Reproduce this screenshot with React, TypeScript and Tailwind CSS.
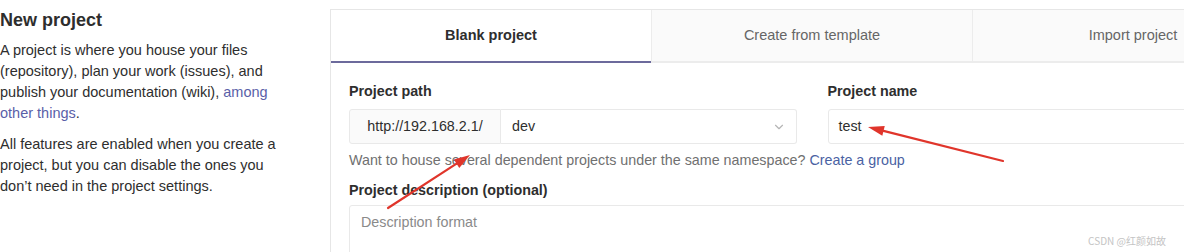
import React from 'react';
import { ChevronDown } from 'lucide-react';

const tabs = ['Blank project', 'Create from template', 'Import project'];

const Arrow: React.FC<{ x1: number; y1: number; x2: number; y2: number }> = ({ x1, y1, x2, y2 }) => {
  const a = Math.atan2(y2 - y1, x2 - x1);
  const len = 16;
  const w = 5;
  const bx = x2 - len * Math.cos(a);
  const by = y2 - len * Math.sin(a);
  const p1 = `${bx + w * Math.sin(a)},${by - w * Math.cos(a)}`;
  const p2 = `${bx - w * Math.sin(a)},${by + w * Math.cos(a)}`;
  return (
    <g>
      <line x1={x1} y1={y1} x2={bx} y2={by} stroke="#e0352b" strokeWidth={2.2} strokeLinecap="round" />
      <polygon points={`${x2},${y2} ${p1} ${p2}`} fill="#e0352b" />
    </g>
  );
};

export default function App() {
  return (
    <div className="relative w-[1184px] h-[252px] overflow-hidden bg-white font-['Liberation_Sans',sans-serif] text-[#2e2e2e]">
      <div className="flex items-start">
        {/* 左侧说明 */}
        <div className="w-[300px] shrink-0 pt-[8px]">
          <div className="w-[282px]">
            <h3 className="text-[18px] font-semibold leading-[24px]">New project</h3>
            <p className="mt-[8px] text-[14.5px] leading-[21px]">
              A project is where you house your files (repository), plan your work (issues), and publish your documentation (wiki),{' '}
              <span className="text-[#5a5fa8]">among other things</span>.
            </p>
            <p className="mt-[10px] text-[14.5px] leading-[21px]">
              All features are enabled when you create a project, but you can disable the ones you don’t need in the project settings.
            </p>
          </div>
        </div>

        {/* 右侧表单 */}
        <div className="ml-[30px] mt-[9px] w-[963px] shrink-0 border-l border-t border-[#e6e6e6]">
          <div className="flex">
            {tabs.map((t, i) => (
              <div
                key={t}
                className={
                  i === 0
                    ? 'flex-1 h-[53px] flex items-center justify-center text-[14.5px] font-semibold text-[#2e2e2e] bg-white border-b-2 border-[#6c6a9c]'
                    : 'flex-1 h-[53px] flex items-center justify-center text-[14.5px] text-[#666] bg-[#fafafa] border-l border-b-2 border-[#ececec]'
                }
              >
                {t}
              </div>
            ))}
          </div>

          <div className="px-[18px] pt-[18px] text-[14.3px]">
            <div className="grid grid-cols-2 gap-[31px]">
              <div>
                <div className="font-semibold leading-[20px]">Project path</div>
                <div className="mt-[8px] flex h-[35px]">
                  <div className="w-[152px] flex items-center justify-center bg-[#fafafa] border border-[#e9e9e9] rounded-l-[3px] text-[#2e2e2e]">
                    http://192.168.2.1/
                  </div>
                  <div className="flex-1 flex items-center justify-between pl-[11px] pr-[10px] border border-l-0 border-[#e9e9e9] rounded-r-[3px]">
                    <span>dev</span>
                    <ChevronDown size={14} className="text-[#b5b5b5]" />
                  </div>
                </div>
              </div>
              <div>
                <div className="font-semibold leading-[20px]">Project name</div>
                <div className="mt-[8px] h-[35px] flex items-center px-[10px] border border-[#e9e9e9] rounded-[3px]">
                  test
                </div>
              </div>
            </div>

            <div className="mt-[6px] leading-[20px] text-[#707070]">
              Want to house several dependent projects under the same namespace?{' '}
              <span className="text-[#4a62a3]">Create a group</span>
            </div>

            <div className="mt-[10px] font-semibold leading-[20px]">Project description (optional)</div>
            <div className="mt-[5px] h-[80px] border border-[#e9e9e9] rounded-[3px] px-[11px] pt-[6px] text-[#8a8a8a]">
              Description format
            </div>
          </div>
        </div>
      </div>

      {/* 标注箭头 */}
      <svg className="absolute inset-0 pointer-events-none" width={1184} height={252}>
        <Arrow x1={388} y1={208} x2={470} y2={155} />
        <Arrow x1={1003} y1={161} x2={868} y2={127} />
      </svg>

      <div className="absolute right-[18px] bottom-[4px] text-[10px] text-[#c4c4c4] font-['Noto_Sans_CJK_SC',sans-serif]">
        CSDN @红颜如故
      </div>
    </div>
  );
}
